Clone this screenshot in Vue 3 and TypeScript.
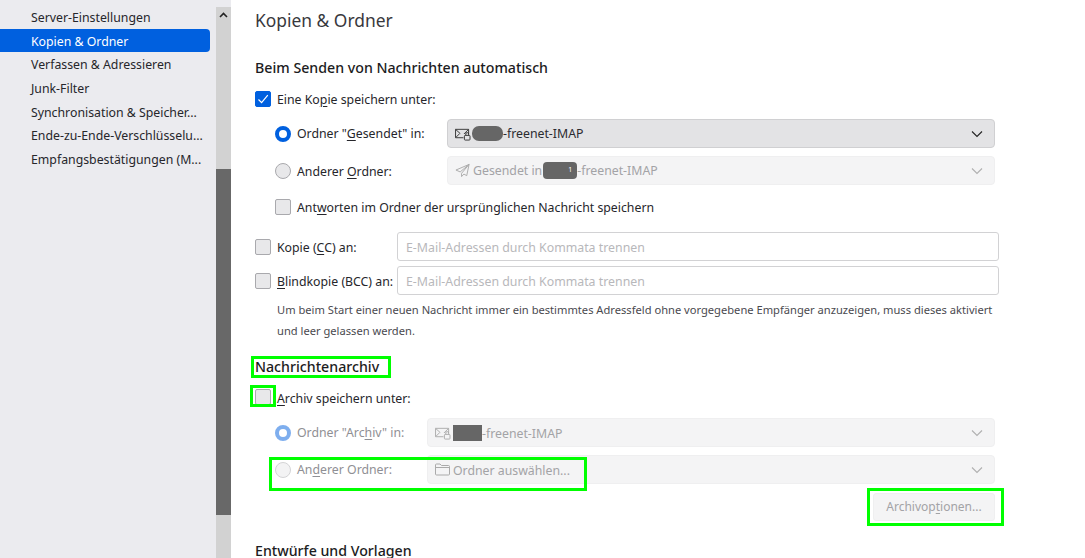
<script setup lang="ts">
const navItems: string[] = [
  'Server-Einstellungen',
  'Kopien & Ordner',
  'Verfassen & Adressieren',
  'Junk-Filter',
  'Synchronisation & Speicher...',
  'Ende-zu-Ende-Verschlüsselu...',
  'Empfangsbestätigungen (M...',
]
</script>

<template>
  <div class="page">
    <aside class="sidebar">
      <nav class="nav">
        <div v-for="item in navItems" :key="item" class="nav-item" :class="{ active: item === 'Kopien & Ordner' }">{{ item }}</div>
      </nav>
      <div class="scrollbar">
        <div class="sb-top"></div>
        <div class="sb-btn">
          <svg width="9" height="6" viewBox="0 0 9 6"><path d="M1 5 L4.5 1.5 L8 5" fill="none" stroke="#222" stroke-width="1.6"/></svg>
        </div>
        <div class="sb-track"></div>
        <div class="sb-thumb"></div>
      </div>
    </aside>

    <main class="content">
      <h1 class="title">Kopien &amp; Ordner</h1>

      <h2 class="heading first">Beim Senden von Nachrichten automatisch</h2>

      <div class="check-row top-row">
        <span class="check on">
          <svg width="12" height="12" viewBox="0 0 12 12"><path d="M1.5 6.5 L4.6 9.6 L10.8 2.2" fill="none" stroke="#fff" stroke-width="1.2"/></svg>
        </span>
        <span class="lbl">Eine Ko<u>p</u>ie speichern unter:</span>
      </div>

      <div class="indent">
        <div class="radio-row r1">
          <span class="radio on"></span>
          <span class="lbl rl">Ordner "<u>G</u>esendet" in:</span>
          <div class="select">
            <svg class="ico mail" width="16" height="14" viewBox="0 0 17 15"><path d="M.5 2.5h14v5M9 11.5H.5v-9M.7 2.7 5.5 7M14.3 2.7 9.5 7.5M1 11l4-4" fill="none" stroke="#333" stroke-width="1"/><rect x="10" y="9" width="6" height="5" rx=".8" fill="none" stroke="#333"/><path d="M11.5 9V7.5a1.5 1.5 0 0 1 3 0V9" fill="none" stroke="#333"/></svg>
            <span class="blob b1"></span><span>-freenet-IMAP</span>
            <svg class="chev" width="12" height="8" viewBox="0 0 12 8"><path d="M1 1.5 6 6.5 11 1.5" fill="none" stroke="#222" stroke-width="1.1"/></svg>
          </div>
        </div>
        <div class="radio-row r2">
          <span class="radio"></span>
          <span class="lbl rl low">Anderer <u>O</u>rdner:</span>
          <div class="select disabled">
            <svg class="ico" width="15" height="15" viewBox="0 0 16 15"><path d="M15 1 1 7l4.5 2L15 1 7 10.5V14l2.5-2.700 3 1.700Z" fill="none" stroke="#aaa" stroke-width="1" stroke-linejoin="round"/></svg>
            <span>Gesendet in</span><span class="blob b2"><i class="one">1</i></span><span>-freenet-IMAP</span>
            <svg class="chev" width="12" height="8" viewBox="0 0 12 8"><path d="M1 1.5 6 6.5 11 1.5" fill="none" stroke="#b0b0b0" stroke-width="1.1"/></svg>
          </div>
        </div>
        <div class="check-row r3">
          <span class="check"></span>
          <span class="lbl">Ant<u>w</u>orten im Ordner der ursprünglichen Nachricht speichern</span>
        </div>
      </div>

      <div class="addr-row a1">
        <span class="check"></span>
        <span class="lbl addr-lbl low">Kopie (<u>C</u>C) an:</span>
        <div class="input">E-Mail-Adressen durch Kommata trennen</div>
      </div>
      <div class="addr-row a2">
        <span class="check"></span>
        <span class="lbl addr-lbl low"><u>B</u>lindkopie (BCC) an:</span>
        <div class="input">E-Mail-Adressen durch Kommata trennen</div>
      </div>
      <p class="hint">Um beim Start einer neuen Nachricht immer ein bestimmtes Adressfeld ohne vorgegebene Empfänger anzuzeigen, muss dieses aktiviert und leer gelassen werden.</p>

      <div class="mark-wrap h-archive">
        <h2 class="heading">Nachrichtenarchiv</h2>
        <span class="mark m-head"></span>
      </div>

      <div class="check-row arch-check">
        <span class="check-mark-wrap">
          <span class="check"></span>
          <span class="mark m-check"></span>
        </span>
        <span class="lbl low"><u>A</u>rchiv speichern unter:</span>
      </div>

      <div class="indent">
        <div class="radio-row ar1">
          <span class="radio on faded"></span>
          <span class="lbl rl2 muted">Ordner "Arc<u>h</u>iv" in:</span>
          <div class="select disabled wide">
            <svg class="ico mail" width="16" height="14" viewBox="0 0 17 15"><path d="M.5 2.5h14v5M9 11.5H.5v-9M.7 2.7 5.5 7M14.3 2.7 9.5 7.5M1 11l4-4" fill="none" stroke="#aaa" stroke-width="1"/><rect x="10" y="9" width="6" height="5" rx=".8" fill="none" stroke="#aaa"/><path d="M11.5 9V7.5a1.5 1.5 0 0 1 3 0V9" fill="none" stroke="#aaa"/></svg>
            <span class="blob b3"></span><span class="low">-freenet-IMAP</span>
            <svg class="chev" width="12" height="8" viewBox="0 0 12 8"><path d="M1 1.5 6 6.5 11 1.5" fill="none" stroke="#b0b0b0" stroke-width="1.1"/></svg>
          </div>
        </div>
        <div class="radio-row ar2 mark-wrap">
          <span class="radio faded"></span>
          <span class="lbl rl2 muted">An<u>d</u>erer Ordner:</span>
          <div class="select disabled wide">
            <svg class="ico" width="15" height="13" viewBox="0 0 15 13"><path d="M.5 11V2a1 1 0 0 1 1-1h3.500l1.500 1.500h7a1 1 0 0 1 1 1V11a1 1 0 0 1-1 1h-12a1 1 0 0 1-1-1ZM.5 4.500h14" fill="none" stroke="#aaa" stroke-width="1"/></svg>
            <span class="low">Ordner auswählen...</span>
            <svg class="chev" width="12" height="8" viewBox="0 0 12 8"><path d="M1 1.5 6 6.5 11 1.5" fill="none" stroke="#b0b0b0" stroke-width="1.1"/></svg>
          </div>
          <span class="mark m-other"></span>
        </div>
        <div class="btn-row">
          <div class="mark-wrap">
            <div class="button">Archivop<u>t</u>ionen...</div>
            <span class="mark m-btn"></span>
          </div>
        </div>
      </div>

      <h2 class="heading last">Entwürfe und Vorlagen</h2>
    </main>
  </div>
</template>

<style>
html, body { margin: 0; padding: 0; background: #fff; overflow: hidden; }
</style>

<style scoped>
.page {
  display: flex;
  width: 1085px;
  height: 558px;
  overflow: hidden;
  font-family: "Noto Sans", "Open Sans", sans-serif;
  font-size: 12.3px;
  color: #26262b;
  background: #fff;
}
.sidebar { display: flex; width: 231px; flex: none; background: #ebebef; }
.nav { width: 216px; padding-top: 5px; box-sizing: border-box; }
.nav-item {
  box-sizing: border-box;
  height: 23.7px;
  line-height: 23.7px;
  padding-top: 1px;
  padding-left: 31px;
  margin-right: 6px;
  border-radius: 0 4px 4px 0;
  white-space: nowrap;
  overflow: hidden;
}
.nav-item.active { background: #0060df; color: #fff; }
.scrollbar { width: 15px; display: flex; flex-direction: column; background: #d2d2d2; }
.sb-top { height: 7px; background: #ebebef; }
.sb-btn { height: 15px; display: flex; align-items: center; justify-content: center; }
.sb-track { height: 147px; }
.sb-thumb { height: 346px; background: #686868; }
.content { flex: 1; padding-left: 24px; min-width: 0; }
.title { margin: 0; font-size: 17.4px; font-weight: 400; line-height: 23px; padding-top: 9px; color: #38383d; }
.heading { margin: 0; font-size: 14.2px; font-weight: 500; line-height: 20px; color: #1c1c22; }
.heading.first { margin-top: 26px; }
.heading.last { margin-top: 20px; }
u { text-underline-offset: 2px; text-decoration-thickness: 1px; }
.lbl { white-space: nowrap; }
.low { padding-top: 2px; }
.muted { color: #8f8f94; }
.check-row, .radio-row, .addr-row { display: flex; align-items: center; }
.check {
  flex: none;
  box-sizing: border-box;
  width: 16px; height: 16px;
  border: 1px solid #a9a9ad;
  border-radius: 2px;
  background: #e8e8ea;
  margin-right: 6px;
  display: flex; align-items: center; justify-content: center;
}
.check.on { background: #0060df; border-color: #0060df; }
.radio {
  flex: none;
  box-sizing: border-box;
  width: 16px; height: 16px;
  border: 1px solid #a9a9ad;
  border-radius: 50%;
  background: #e8e8ea;
  margin-right: 6px;
}
.radio.on { background: #fff; border: 4px solid #0060df; }
.radio.faded { opacity: .5; }
.top-row { height: 24px; margin-top: 9px; }
.indent { padding-left: 20px; }
.radio-row { height: 29px; }
.r1 { margin-top: 8px; }
.r2 { margin-top: 8px; }
.r3 { margin-top: 10px; height: 24px; }
.rl { width: 150px; flex: none; }
.rl2 { width: 130px; flex: none; }
.select {
  box-sizing: border-box;
  flex: none;
  width: 548px; height: 29px;
  display: flex; align-items: center;
  padding: 0 7px;
  background: #e3e3e5;
  border: 1px solid #d0d0d2;
  border-radius: 4px;
  color: #2b2b30;
}
.select.disabled { background: #f4f4f5; border-color: #efeff0; color: #a3a3a6; }
.select.wide { width: 568px; }
.ico { flex: none; margin-right: 3px; }
.ico.mail { margin-right: 1px; }
.chev { margin-left: auto; margin-right: 4px; flex: none; }
.blob { display: inline-block; background: #666; height: 15px; flex: none; position: relative; }
.b1 { width: 31px; border-radius: 7px; }
.b2 { width: 34px; border-radius: 4px; height: 17px; margin-left: 1px; }
.b3 { width: 29px; height: 16px; margin-left: 1px; }
.one { position: absolute; left: 25px; top: 3px; font-size: 7px; font-style: normal; color: #fff; }
.addr-row { height: 29px; }
.a1 { margin-top: 13px; }
.a2 { margin-top: 5px; }
.addr-lbl { width: 120px; flex: none; }
.input {
  box-sizing: border-box;
  width: 602px; height: 29px;
  line-height: 29px;
  padding-left: 8px;
  font-size: 12.35px;
  border: 1px solid #d2d2d4;
  border-radius: 3px;
  color: #b8b8bb;
  background: #fff;
}
.hint { margin: 4px 0 0 22px; width: 722px; font-size: 11.15px; line-height: 21px; color: #4a4a4f; }
.mark-wrap { position: relative; }
.h-archive { margin-top: 16px; width: max-content; }
.mark { position: absolute; border: 3px solid #00ff00; box-sizing: border-box; pointer-events: none; }
.m-head { left: -4px; top: -1px; width: 140px; height: 22px; }
.arch-check { margin-top: 8px; height: 24px; }
.check-mark-wrap { position: relative; display: flex; }
.m-check { left: -5px; top: -4px; width: 26px; height: 22px; }
.ar1 { margin-top: 9px; }
.ar2 { margin-top: 8px; }
.m-other { left: -6px; top: 2px; width: 318px; height: 34px; }
.btn-row { display: flex; justify-content: flex-end; width: 720px; margin-top: 9px; }
.button {
  box-sizing: border-box;
  width: 122px; height: 28px;
  line-height: 26px;
  text-align: center;
  font-size: 12px;
  background: #f4f4f5;
  border: 1px solid #efeff0;
  border-radius: 3px;
  color: #a3a3a6;
}
.m-btn { left: -6px; top: -5px; width: 137px; height: 38px; }
</style>
